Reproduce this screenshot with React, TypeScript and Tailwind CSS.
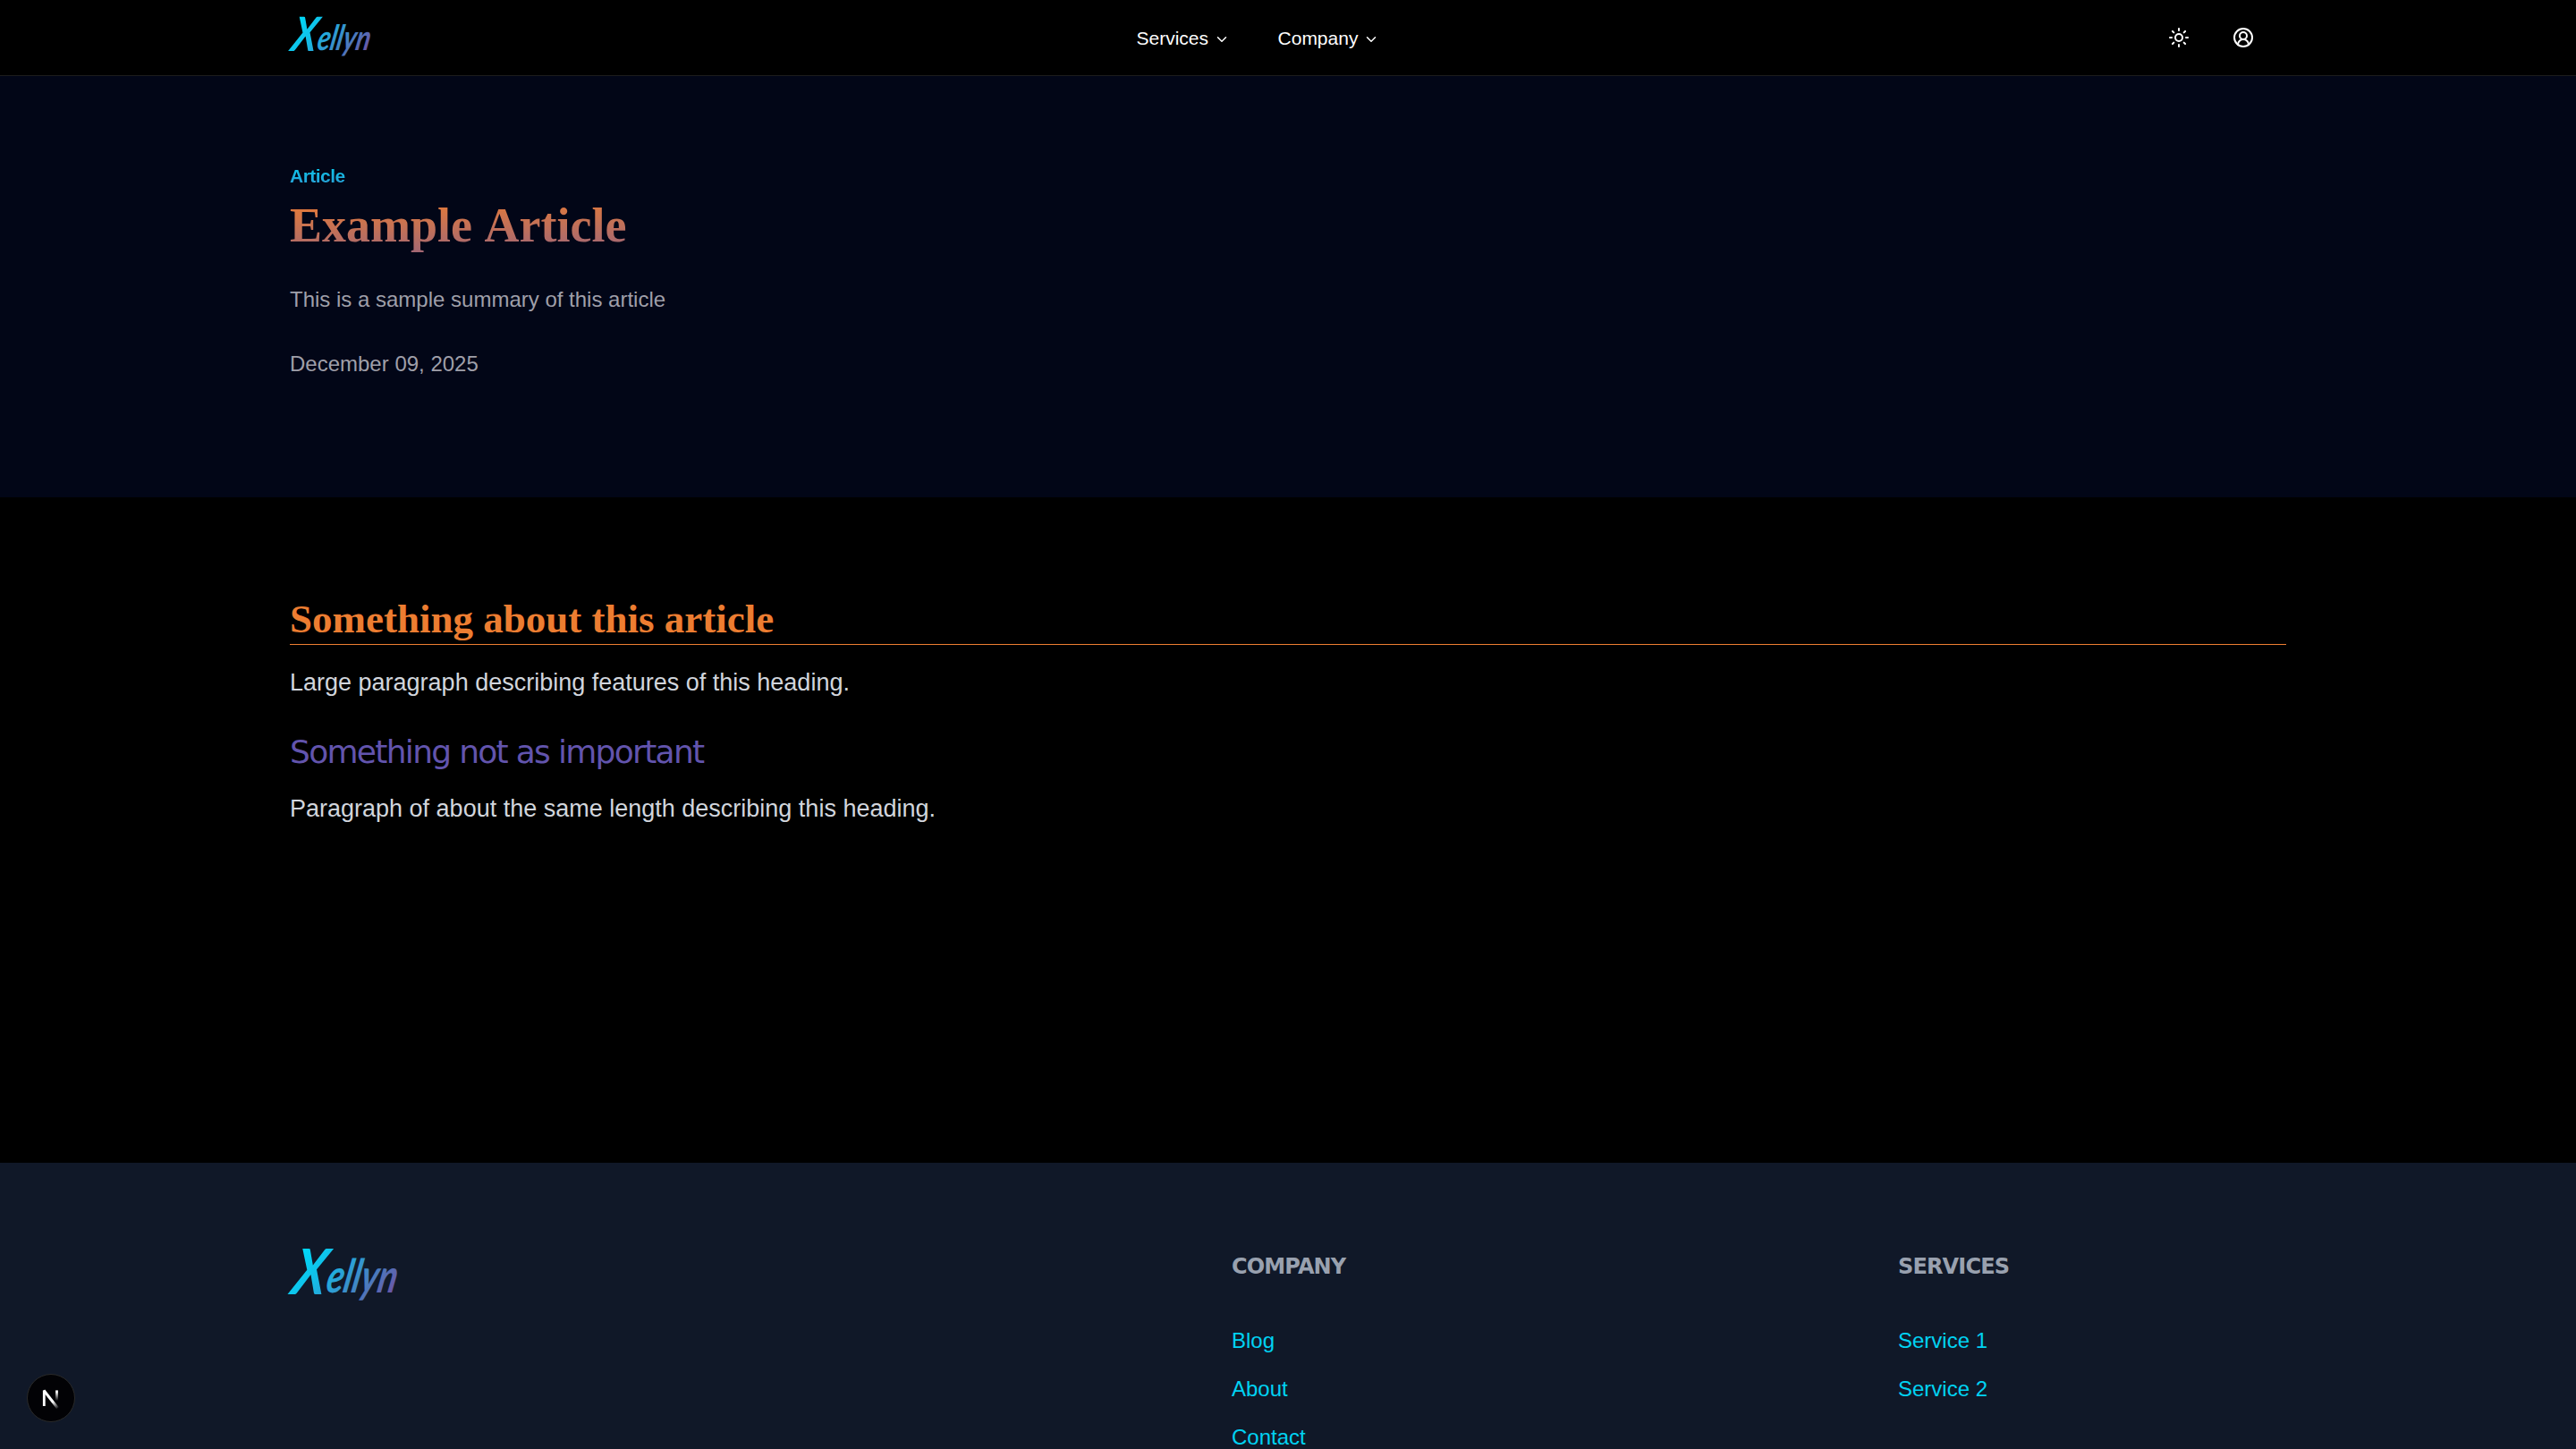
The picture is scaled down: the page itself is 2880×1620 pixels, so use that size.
import React from "react";
import { ChevronDown, CircleUserRound, Sun } from "lucide-react";

const navItems: string[] = ["Services", "Company"];

const footerColumns: { title: string; links: string[] }[] = [
    { title: "Company", links: ["Blog", "About", "Contact"] },
    { title: "Services", links: ["Service 1", "Service 2"] },
];

const Logo = ({ id, className }: { id: string; className: string }) => (
    <svg viewBox="0 0 90 48" className={className} role="img" aria-label="Xellyn">
        <defs>
            <linearGradient id={id} gradientUnits="userSpaceOnUse" x1="6" y1="-38" x2="84" y2="8">
                <stop offset="0" stopColor="#00d8f8" />
                <stop offset="0.25" stopColor="#12bfe8" />
                <stop offset="1" stopColor="#6e50a3" />
            </linearGradient>
        </defs>
        <text
            transform="translate(0 38) skewX(-11)"
            fill={`url(#${id})`}
            fontFamily="Lato, sans-serif"
            fontStyle="italic"
            fontWeight="700"
        >
            <tspan x="0" y="0" fontSize="53" textLength="28" lengthAdjust="spacingAndGlyphs">X</tspan>
            <tspan x="29" y="-1" fontSize="39" textLength="59" lengthAdjust="spacingAndGlyphs">ellyn</tspan>
        </text>
    </svg>
);

const Header = () => (
    <header className="h-[85px] border-b border-[#1c1c1c] bg-black">
        <div className="mx-auto grid h-full w-[2232px] grid-cols-[946.5px_1fr_auto] items-center">
            <a href="#" className="pt-[2px]">
                <Logo id="header-logo" className="h-12 w-[90px] overflow-visible" />
            </a>
            <nav className="flex gap-[54px]">
                {navItems.map((item) => (
                    <button key={item} className="flex items-center gap-[5.5px] pt-px text-[21px] leading-[30px] text-white">
                        {item}
                        <ChevronDown size={18} className="mt-[2px]" />
                    </button>
                ))}
            </nav>
            <div className="flex gap-12 pr-9 text-white">
                <Sun size={24} />
                <CircleUserRound size={24} />
            </div>
        </div>
    </header>
);

const Hero = () => (
    <section className="h-[471px] bg-[#020617] pt-[97px]">
        <div className="mx-auto w-[2232px]">
            <p className="bg-linear-to-br/srgb from-[#00d3f2] to-[#6254ad] bg-clip-text text-[21px] leading-[30px] font-bold tracking-tight text-transparent">
                Article
            </p>
            <h1 className="mt-[10px] bg-linear-to-br/srgb from-[#ed7d31] to-[#6254ad] bg-clip-text font-['Liberation_Serif',serif] text-[54px] leading-[60px] font-bold text-transparent [font-kerning:none]">
                Example Article
            </h1>
            <p className="mt-[35px] text-2xl leading-9 text-[#9f9fa9]">This is a sample summary of this article</p>
            <p className="mt-9 text-2xl leading-9 text-[#9f9fa9]">December 09, 2025</p>
        </div>
    </section>
);

const ArticleBody = () => (
    <main className="h-[744px] bg-black pt-[109px]">
        <article className="mx-auto w-[2232px]">
            <h2 className="border-b border-[#ed7d31] pb-px font-['Liberation_Serif',serif] text-[45px] leading-[54px] font-bold text-[#ed7d31]">
                Something about this article
            </h2>
            <p className="mt-[21px] text-[27px] leading-[42px] text-gray-300">
                Large paragraph describing features of this heading.
            </p>
            <h3 className="mt-[30px] font-['DejaVu_Sans',sans-serif] text-4xl leading-[54px] tracking-[-1.7px] text-[#6254ad]">
                Something not as important
            </h3>
            <p className="mt-[15px] text-[27px] leading-[42px] text-gray-300">
                Paragraph of about the same length describing this heading.
            </p>
        </article>
    </main>
);

const Footer = () => (
    <footer className="h-[400px] bg-gray-900 pt-24">
        <div className="mx-auto grid w-[2232px] grid-cols-[1053px_745px_1fr]">
            <a href="#">
                <Logo id="footer-logo" className="h-16 w-[120px] overflow-visible" />
            </a>
            {footerColumns.map(({ title, links }) => (
                <div key={title} className="pt-px">
                    <h4 className="pt-px font-['DejaVu_Sans',sans-serif] text-2xl leading-9 font-bold tracking-[-0.85px] text-gray-400 uppercase">
                        {title}
                    </h4>
                    <ul className="mt-[47px] flex flex-col gap-[18px]">
                        {links.map((link) => (
                            <li key={link} className="text-2xl leading-9 text-cyan-400">{link}</li>
                        ))}
                    </ul>
                </div>
            ))}
        </div>
    </footer>
);

const DevBadge = () => (
    <div className="absolute top-[1536px] left-[30px] size-[54px] rounded-full border border-[#2a2a2a] bg-[#020205]">
        <svg viewBox="0 0 52 52" fill="none" className="size-[52px]">
            <defs>
                <linearGradient id="stem" gradientUnits="userSpaceOnUse" x1="0" y1="17" x2="0" y2="29">
                    <stop offset="0.2" stopColor="#fff" />
                    <stop offset="1" stopColor="#fff" stopOpacity="0" />
                </linearGradient>
                <linearGradient id="slash" gradientUnits="userSpaceOnUse" x1="25" y1="27" x2="34" y2="38">
                    <stop offset="0.3" stopColor="#fff" />
                    <stop offset="1" stopColor="#fff" stopOpacity="0" />
                </linearGradient>
            </defs>
            <path d="M18.3 17.4V35" stroke="#fff" strokeWidth="2.8" />
            <path d="M32.5 17.4V29" stroke="url(#stem)" strokeWidth="2.8" />
            <path d="M18 17.5L33.5 37.2" stroke="url(#slash)" strokeWidth="3" />
        </svg>
    </div>
);

const App = () => {
    return (
        <div className="relative h-[1620px] w-full overflow-hidden bg-black font-['Liberation_Sans',Arial,sans-serif]">
            <Header />
            <Hero />
            <ArticleBody />
            <Footer />
            <DevBadge />
        </div>
    );
}

export default App;
